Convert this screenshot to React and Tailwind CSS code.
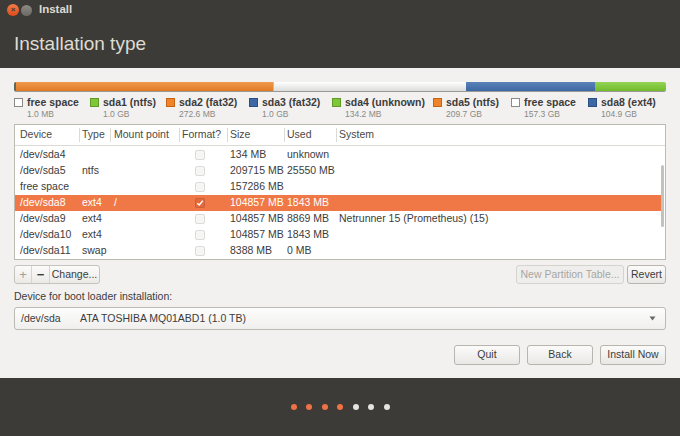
import React from 'react';

const font = { fontFamily: '"Liberation Sans", Arial, sans-serif' };

const legend = [
  { name: 'free space', size: '1.0 MB', box: 'border border-[#8a8a86] bg-white', w: 'w-[76px]' },
  { name: 'sda1 (ntfs)', size: '1.0 GB', box: 'bg-[#7fc638] border border-[#5e9a25]', w: 'w-[76px]' },
  { name: 'sda2 (fat32)', size: '272.6 MB', box: 'bg-[#f0842b] border border-[#c96314]', w: 'w-[83px]' },
  { name: 'sda3 (fat32)', size: '1.0 GB', box: 'bg-[#3d68a3] border border-[#2a4f82]', w: 'w-[83px]' },
  { name: 'sda4 (unknown)', size: '134.2 MB', box: 'bg-[#7fc638] border border-[#5e9a25]', w: 'w-[101px]' },
  { name: 'sda5 (ntfs)', size: '209.7 GB', box: 'bg-[#f0842b] border border-[#c96314]', w: 'w-[78px]' },
  { name: 'free space', size: '157.3 GB', box: 'border border-[#8a8a86] bg-white', w: 'w-[77px]' },
  { name: 'sda8 (ext4)', size: '104.9 GB', box: 'bg-[#3d68a3] border border-[#2a4f82]', w: 'w-[78px]' },
];

const rows = [
  { dev: '/dev/sda4', type: '', mount: '', size: '134 MB', used: 'unknown', sys: '' },
  { dev: '/dev/sda5', type: 'ntfs', mount: '', size: '209715 MB', used: '25550 MB', sys: '' },
  { dev: 'free space', type: '', mount: '', size: '157286 MB', used: '', sys: '' },
  { dev: '/dev/sda8', type: 'ext4', mount: '/', size: '104857 MB', used: '1843 MB', sys: '', sel: true },
  { dev: '/dev/sda9', type: 'ext4', mount: '', size: '104857 MB', used: '8869 MB', sys: 'Netrunner 15 (Prometheus) (15)' },
  { dev: '/dev/sda10', type: 'ext4', mount: '', size: '104857 MB', used: '1843 MB', sys: '' },
  { dev: '/dev/sda11', type: 'swap', mount: '', size: '8388 MB', used: '0 MB', sys: '' },
];

const Btn = ({ children, className = '' }) => (
  <div className={`flex items-center justify-center rounded-[3px] border border-[#b8b5ae] bg-gradient-to-b from-[#fbfbfa] to-[#e9e8e5] text-[#3c3c3c] ${className}`}>
    {children}
  </div>
);

const App = () => {
  return (
    <div className="flex h-[436px] w-[680px] flex-col overflow-hidden text-[10.5px] text-[#3c3c3c]" style={font}>
      {/* title bar */}
      <div className="flex h-[20px] items-center bg-[#3c3b37] pl-[7px]">
        <div className="flex h-[12px] w-[12px] items-center justify-center rounded-full bg-gradient-to-b from-[#f37a4a] to-[#df4a16] text-[8px] font-bold leading-none text-[#3c3b37]">×</div>
        <div className="ml-[2px] h-[11px] w-[11px] rounded-full bg-gradient-to-b from-[#8d8b84] to-[#6b6963]" />
        <span className="ml-[7px] text-[11.5px] font-bold text-[#dfdbd2]">Install</span>
      </div>
      {/* header */}
      <div className="flex h-[48px] items-center bg-[#3c3b37] pl-[14px]">
        <span className="text-[19px] text-[#dfdbd2]">Installation type</span>
      </div>

      {/* body */}
      <div className="flex flex-1 flex-col bg-[#f2f1f0] px-[14px] pt-[14px]">
        {/* partition bar */}
        <div className="flex h-[10px] w-[652px] overflow-hidden rounded-[2px] border-b border-[#9a9994]">
          <div className="w-[2px] bg-[#5a6a58]" />
          <div className="w-[257px] bg-gradient-to-b from-[#f09a4c] to-[#de7a22]" />
          <div className="w-[1px] bg-[#9cc6e6]" />
          <div className="w-[192px] bg-gradient-to-b from-[#ffffff] to-[#dcdcda]" />
          <div className="w-[129px] bg-gradient-to-b from-[#5b82b8] to-[#3d68a3]" />
          <div className="flex-1 bg-gradient-to-b from-[#94d454] to-[#72bb2c]" />
        </div>

        {/* legend */}
        <div className="mt-[4px] flex">
          {legend.map((l, i) => (
            <div key={i} className={`flex flex-col ${l.w}`}>
              <div className="flex items-center">
                <div className={`h-[9px] w-[9px] ${l.box}`} />
                <span className="ml-[4px] font-bold leading-[13px] text-[#3c3c3c]">{l.name}</span>
              </div>
              <span className="pl-[13px] text-[8.5px] leading-[11px] text-[#8a8985]">{l.size}</span>
            </div>
          ))}
        </div>

        {/* table */}
        <div className="relative mt-[4px] h-[136px] w-[652px] border border-[#bdbab3] bg-white">
          <div className="flex h-[21px] items-center border-b border-[#dcdad5] text-[#4a4a48]">
            <div className="w-[64px] pl-[5px]">Device</div>
            <div className="h-[14px] w-px bg-[#dcdad5]" />
            <div className="w-[30px] pl-[2px]">Type</div>
            <div className="h-[14px] w-px bg-[#dcdad5]" />
            <div className="w-[68px] pl-[3px]">Mount point</div>
            <div className="h-[14px] w-px bg-[#dcdad5]" />
            <div className="w-[47px] pl-[2px]">Format?</div>
            <div className="h-[14px] w-px bg-[#dcdad5]" />
            <div className="w-[56px] pl-[2px]">Size</div>
            <div className="h-[14px] w-px bg-[#dcdad5]" />
            <div className="w-[51px] pl-[2px]">Used</div>
            <div className="h-[14px] w-px bg-[#dcdad5]" />
            <div className="flex-1 pl-[2px]">System</div>
          </div>
          <div className="pt-[1px]">
            {rows.map((r, i) => (
              <div
                key={i}
                className={`flex h-[16px] w-[648px] items-center ${r.sel ? 'bg-[#f07746] text-white' : ''}`}
              >
                <div className="w-[65px] pl-[5px]">{r.dev}</div>
                <div className="w-[31px] pl-[2px]">{r.type}</div>
                <div className="w-[69px] pl-[3px]">{r.mount}</div>
                <div className="flex w-[48px] justify-start pl-[15px]">
                  {r.sel ? (
                    <div className="flex h-[10px] w-[10px] items-center justify-center rounded-[2px] border border-[#c9603a] bg-[#e8683a]">
                      <svg width="8" height="8" viewBox="0 0 8 8">
                        <path d="M1.2 4.2 L3.2 6 L6.8 1.8" fill="none" stroke="#ffffff" strokeWidth="1.4" />
                      </svg>
                    </div>
                  ) : (
                    <div className="h-[10px] w-[10px] rounded-[2px] border border-[#dedcd8] bg-[#f6f6f5]" />
                  )}
                </div>
                <div className="w-[57px] pl-[2px]">{r.size}</div>
                <div className="w-[52px] pl-[2px]">{r.used}</div>
                <div className="flex-1 whitespace-nowrap pl-[2px]">{r.sys}</div>
              </div>
            ))}
          </div>
          {/* scrollbar */}
          <div className="absolute right-[1px] top-[40px] h-[62px] w-[3px] rounded-[2px] bg-[#c4c2bd]" />
        </div>

        {/* table buttons */}
        <div className="mt-[5px] flex h-[19px] justify-between">
          <div className="flex rounded-[3px] border border-[#c6c3bc] bg-gradient-to-b from-[#fbfbfa] to-[#eceae7]">
            <div className="flex w-[17px] items-center justify-center border-r border-[#d6d4cf] text-[13px] text-[#a09e99]">+</div>
            <div className="flex w-[18px] items-center justify-center border-r border-[#d6d4cf] text-[13px] font-bold text-[#3c3c3c]">−</div>
            <div className="flex w-[49px] items-center justify-center">Change...</div>
          </div>
          <div className="flex gap-[3px]">
            <div className="flex w-[108px] items-center justify-center rounded-[3px] border border-[#d6d4cf] bg-[#efeeec] text-[#a8a6a1]">New Partition Table...</div>
            <Btn className="w-[39px]">Revert</Btn>
          </div>
        </div>

        <div className="mt-[6px] leading-[13px]">Device for boot loader installation:</div>

        <div className="mt-[4px] flex h-[23px] w-[652px] items-center rounded-[3px] border border-[#bdbab3] bg-gradient-to-b from-[#fdfdfd] to-[#f0efed]">
          <span className="w-[65px] pl-[6px]">/dev/sda</span>
          <span className="flex-1">ATA TOSHIBA MQ01ABD1 (1.0 TB)</span>
          <svg width="7" height="5" viewBox="0 0 7 5" className="mr-[9px]">
            <path d="M0.5 0.5 L6.5 0.5 L3.5 4.5 Z" fill="#6a6965" />
          </svg>
        </div>

        <div className="mt-[15px] flex justify-end gap-[7px]">
          <Btn className="h-[20px] w-[66px]">Quit</Btn>
          <Btn className="h-[20px] w-[66px]">Back</Btn>
          <Btn className="h-[20px] w-[66px] border-[#8e8b85]">Install Now</Btn>
        </div>
      </div>

      {/* footer */}
      <div className="flex h-[58px] items-center justify-center gap-[9.5px] bg-[#3c3b37]">
        {[0, 1, 2, 3, 4, 5, 6].map((i) => (
          <div
            key={i}
            className={`h-[6px] w-[6px] rounded-full ${i < 4 ? 'bg-[#ee7244]' : 'bg-[#e6e4df]'}`}
          />
        ))}
      </div>
    </div>
  );
};

export default App;
